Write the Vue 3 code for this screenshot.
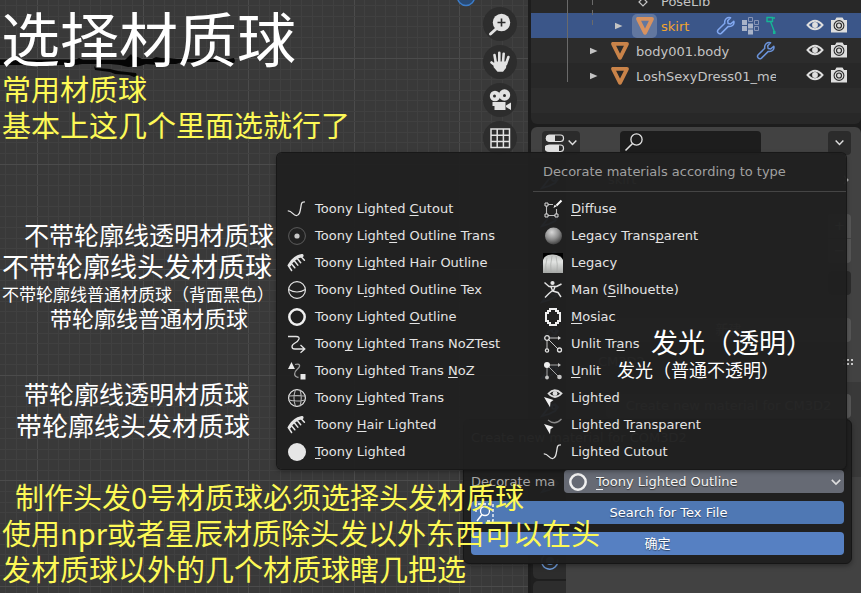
<script setup>
import { ref } from 'vue'

const pitch = 105.6
const gridLines = (start, end) => {
  const out = []
  for (let i = -10; start + (i * pitch) / 10 < end; i++) {
    out.push({ at: Math.floor(start + (i * pitch) / 10) + 0.5, major: i % 10 === 0 })
  }
  return out
}
const columns = gridLines(37.5, 1900)
const rows = gridLines(58.5, 1200)

const query = ref('')
const material = ref('Toony Lighted Outline')

const outliner = [
  { name: 'skirt', depth: 1, active: true, mods: ['wrench', 'lattice', 'bone'] },
  { name: 'body001.body', depth: 0, mods: ['wrench'] },
  { name: 'LoshSexyDress01_me', depth: 0, mods: [] },
]

// Each label is split around its keyboard mnemonic: [before, key, after].
const toony = [
  { icon: 'curve', label: ['Toony Lighted ', 'C', 'utout'] },
  { icon: 'dot', label: ['Toony Light', 'e', 'd Outline Trans'] },
  { icon: 'comb', label: ['Toony Li', 'g', 'hted Hair Outline'] },
  { icon: 'ball', label: ['Toony L', 'i', 'ghted Outline Tex'] },
  { icon: 'ring', label: ['Toony Lighted ', 'O', 'utline'] },
  { icon: 'snake', label: ['Toon', 'y', ' Lighted Trans NoZTest'] },
  { icon: 'link', label: ['Toony Lighted Trans ', 'N', 'oZ'] },
  { icon: 'globe', label: ['Toony ', 'L', 'ighted Trans'] },
  { icon: 'comb', label: ['Toony ', 'H', 'air Lighted'] },
  { icon: 'disc', label: ['', 'T', 'oony Lighted'] },
]
const basic = [
  { icon: 'brushbox', label: ['', 'D', 'iffuse'] },
  { icon: 'sphere', label: ['Legacy Trans', 'p', 'arent'] },
  { icon: 'hair', label: ['Legacy', '', ''] },
  { icon: 'man', label: ['Man (', 'S', 'ilhouette)'] },
  { icon: 'mosaic', label: ['', 'M', 'osiac'] },
  { icon: 'nodes', label: ['Unlit Tr', 'a', 'ns'] },
  { icon: 'nodesfill', label: ['', 'U', 'nlit'] },
  { icon: 'eyecursor', label: ['Lighted', '', ''] },
  { icon: 'arccursor', label: ['Lighted T', 'r', 'ansparent'] },
  { icon: 'curve', label: ['Lighted Cutout', '', ''] },
]
const labelOf = (item) => item.label.join('')
</script>

<template>
  <main class="app">
    <svg class="defs" aria-hidden="true">
      <defs>
        <radialGradient id="ball-shade" cx="40%" cy="28%" r="75%">
          <stop offset="0" stop-color="#d8d8d8" /><stop offset=".55" stop-color="#8e8e8e" /><stop offset="1" stop-color="#3c3c3c" />
        </radialGradient>
        <linearGradient id="hair-shade" x1="0" y1="0" x2="0" y2="1">
          <stop offset="0" stop-color="#bfc1bf" /><stop offset=".4" stop-color="#e2e4e2" /><stop offset="1" stop-color="#a5a7a5" />
        </linearGradient>
      </defs>
      <symbol id="i-curve" viewBox="0 0 20 20"><path d="M.8 11.800c4.500-.3 5 4.800 8.700 4.800c4 0 3.800-7 5-12q.5-1.800 3.400-1.800" fill="none" stroke="#e4e4e4" stroke-width="1.300" /></symbol>
      <symbol id="i-dot" viewBox="0 0 20 20"><circle cx="10" cy="10" r="8.400" fill="none" stroke="#5c5c5c" /><circle cx="10" cy="10" r="2.600" fill="#c9c9c9" /></symbol>
      <symbol id="i-comb" viewBox="0 0 20 20"><path d="M2.500 12C4.800 7.500 9 3.800 15 2.600" fill="none" stroke="#e4e4e4" stroke-width="3.200" stroke-linecap="round" /><path d="M1.300 12.500l3.300 5M4.300 10.500l3.500 4.300M7.300 7.800l3.500 4.300M10.500 5.700l3.200 4M14 3.500l3.400 3.800" stroke="#e4e4e4" stroke-width="1.500" stroke-linecap="round" /></symbol>
      <symbol id="i-ball" viewBox="0 0 20 20"><circle cx="10" cy="10" r="8.400" fill="none" stroke="#e4e4e4" stroke-width="1.200" /><path d="M1.600 9.500q8.400 5 16.800 0" fill="none" stroke="#e4e4e4" stroke-width="1.200" /></symbol>
      <symbol id="i-ring" viewBox="0 0 20 20"><circle cx="10" cy="10" r="7.700" fill="none" stroke="#f0f0f0" stroke-width="2.500" /></symbol>
      <symbol id="i-snake" viewBox="0 0 20 20"><path d="M1 2.500h8c6 0 2 5-1 6.500c-4 2-4 6 0 6h9.500M13.500 11l4.300 4-4.300 3.700" fill="none" stroke="#e4e4e4" stroke-width="1.300" /></symbol>
      <symbol id="i-link" viewBox="0 0 20 20"><path d="M4.500 1l3.400 7H1zM13.500 13h5v5.500h-5z" fill="#e8e8e8" /><path d="M8 3.500c5-1.500 6 1.500 2.500 4.500s-4.500 7.500 1 8.500" fill="none" stroke="#9c9c9c" stroke-width="1.300" /></symbol>
      <symbol id="i-globe" viewBox="0 0 20 20"><circle cx="10" cy="10" r="8.400" fill="none" stroke="#e4e4e4" stroke-width="1.200" /><path d="M8.500 1.600q-3 8.400 0 16.800M1.600 8q8.400-.8 16.800 0M1.600 12q8.400 2 16.800 0M13 2q2.500 8 0 16" fill="none" stroke="#b4b4b4" stroke-width="1.100" /></symbol>
      <symbol id="i-disc" viewBox="0 0 20 20"><circle cx="10" cy="10" r="9" fill="#e6e6e6" /></symbol>
      <symbol id="i-brushbox" viewBox="0 0 20 20"><path d="M5 5.500h5M3.500 7v8M5 16.500h7M13.500 10v5" fill="none" stroke="#bdbdbd" stroke-width="1.100" /><path d="M2 4h3v3H2zM2 15h3v3H2zM12 15h3v3h-3z" fill="none" stroke="#d8d8d8" /><path d="M18.500 1.500l-5 5" stroke="#fff" stroke-width="2" /><path d="M10.500 9l1-3 2.500 1z" fill="#fff" /></symbol>
      <symbol id="i-sphere" viewBox="0 0 20 20"><circle cx="10.500" cy="10" r="8.500" fill="url(#ball-shade)" /></symbol>
      <symbol id="i-hair" viewBox="0 0 20 20"><path d="M0 0h20v20H0z" fill="#000" /><path d="M0 20V7Q2 1 10 1.500T20 7v13z" fill="url(#hair-shade)" /><path d="M4 5q-2 7-1 15M9 3q-2 8-1 17M13 3q2 8 1 17" stroke="#a8aaa8" stroke-width=".7" fill="none" /></symbol>
      <symbol id="i-man" viewBox="0 0 20 20"><circle cx="9.500" cy="3" r="2.100" fill="#e4e4e4" /><path d="M1.500 2.500L6 6.500h7.500l5-2.500M8 7l1.500 3.500-3.500 3-4 4M12 7l-1.500 3.500M9.500 11l5.500 1.500 3 4.500" fill="none" stroke="#e4e4e4" stroke-width="1.400" stroke-linejoin="round" /></symbol>
      <symbol id="i-mosaic" viewBox="0 0 20 20"><path d="M7 2h6v2h2v2h2v8h-2v2h-2v2H7v-2H5v-2H3V6h2V4h2z" fill="none" stroke="#efefef" stroke-width="2" shape-rendering="crispEdges" /></symbol>
      <symbol id="i-nodes" viewBox="0 0 20 20"><path d="M5.500 4H16M4 5.500V15M5 5l10 10" stroke="#c4c4c4" fill="none" /><g fill="#202020" stroke="#e0e0e0" stroke-width="1.300"><circle cx="4" cy="4" r="2.300" /><circle cx="4" cy="16.500" r="1.600" /><circle cx="16.500" cy="16" r="2" /></g><path d="M15 2l3 2-3 2z" fill="#e0e0e0" /></symbol>
      <symbol id="i-nodesfill" viewBox="0 0 20 20"><path d="M5.500 4H16M4 5.500V15M5 5l10 10" stroke="#a4a4a4" fill="none" /><circle cx="4" cy="4" r="3" fill="#f0f0f0" /><circle cx="4" cy="16.500" r="1.900" fill="#c4c4c4" /><circle cx="16.500" cy="16" r="2.300" fill="#c4c4c4" /><path d="M15 2l3 2-3 2z" fill="#c4c4c4" /></symbol>
      <symbol id="i-eyecursor" viewBox="0 0 20 20"><path d="M5.500 5.500q6-6.500 13 0q-6.500 7-13 0z" fill="none" stroke="#dcdcdc" stroke-width="1.800" /><circle cx="12" cy="5.500" r="2.400" fill="#dcdcdc" /><path d="M1 9l9.500 3-3 2.300-.5 5z" fill="#f0f0f0" /></symbol>
      <symbol id="i-arccursor" viewBox="0 0 20 20"><path d="M5 5q7 6 13.500-1" fill="none" stroke="#8a8a8a" stroke-width="1.300" /><path d="M1 9l9.500 3-3 2.300-.5 5z" fill="#f0f0f0" /></symbol>
      <symbol id="i-wrench" viewBox="0 0 20 20"><path d="M17.800 5.200l-3 2.700-2.700-.4-.4-2.700 2.900-3c-3.500-1-6.600 1.700-5.800 5.500l-6.600 6.500c-1.900 2.400 1 5.200 3.300 3.300l6.800-6.700c3.800.8 6.400-2 5.500-5.200z" fill="none" stroke="currentColor" stroke-width="1.500" stroke-linejoin="round" /></symbol>
      <symbol id="i-lattice" viewBox="0 0 20 20"><path d="M1 4h5v5H1zM1 10h5v5H1zM7 7.500h5v5H7zM7 13.500h5v5H7z" fill="#a9b3c8" /><path d="M7.500 1.500h4v4h-4zM13.500 4.500h4v4h-4zM13.500 10.500h4v4h-4z" fill="none" stroke="#8794b4" /></symbol>
      <symbol id="i-bone" viewBox="0 0 20 20"><path d="M1 1.500h5.500v4H1zM6.500 2H9M4.500 5.500l4 10.500" fill="none" stroke="#16b695" stroke-width="1.400" /><path d="M7 15h2.500v3H7z" fill="#16b695" /></symbol>
      <symbol id="i-mesh" viewBox="0 0 20 20"><path d="M3 2.800h14L10 16.800z" fill="none" stroke="currentColor" stroke-width="3.800" stroke-linejoin="round" /></symbol>
      <symbol id="i-eye" viewBox="0 0 20 20"><path d="M2.500 9q7.500-8.500 15 0q-7.500 8.500-15 0z" fill="none" stroke="#dedede" stroke-width="1.900" /><circle cx="10" cy="9" r="2.900" fill="#dedede" /></symbol>
      <symbol id="i-camera" viewBox="0 0 20 20"><path d="M2 4h4l1.500-2.500h6L15 4h3v12.500H2z" fill="#dedede" /><circle cx="10" cy="9.500" r="4.900" fill="none" stroke="#2b2b2b" stroke-width="1.100" /><circle cx="10" cy="9.500" r="2.500" fill="none" stroke="#2b2b2b" stroke-width="1.200" /></symbol>
      <symbol id="i-chevron" viewBox="0 0 10 10"><path d="M1.500 3.200L5 6.800l3.500-3.600" fill="none" stroke="#dedede" stroke-width="1.300" /></symbol>
      <symbol id="i-search" viewBox="0 0 20 20"><circle cx="12.500" cy="6.500" r="5.600" fill="none" stroke="#e2e2e2" stroke-width="1.300" /><path d="M8.300 10.700L1.500 17.500" stroke="#e2e2e2" stroke-width="1.600" /></symbol>
    </svg>

    <section class="viewport" aria-label="3D viewport">
      <svg class="grid" aria-hidden="true">
        <line v-for="c in columns" :key="'c' + c.at" :x1="c.at" :x2="c.at" y1="0" y2="1200" :class="{ major: c.major }" />
        <line v-for="r in rows" :key="'r' + r.at" :y1="r.at" :y2="r.at" x1="0" x2="1900" :class="{ major: r.major }" />
        <path d="M0 59.500h76l3-1.500 4 2h42l3-3 3-3 2 3h5l4 2h10l4-2 5 1h8l8 1 5 0h46l6-1 1 3-1 2-4-1h-48l-6 2h-10l-8 1-12-1-6 2-12 1-8-2-10-1h-28l-6 1H0z" fill="#050505" />
        <path d="M94 66l2 2 14 1 8 2 18 2 1 3-3 1-5-2-14-1-5-2-15-2z" fill="#050505" />
        <circle cx="466" cy="-3" r="8.500" fill="#284a75" stroke="#3b7cc9" stroke-width="1.500" />
      </svg>
      <div class="tools">
        <button aria-label="Zoom"><svg viewBox="0 0 34 34"><circle cx="18.500" cy="15.500" r="8.700" fill="#e2e2e2" /><path d="M13 22l-5.500 5" stroke="#e2e2e2" stroke-width="3" stroke-linecap="round" /><path d="M18.500 11.500v8M14.500 15.500h8" stroke="#2b2b2b" stroke-width="1.600" /></svg></button>
        <button aria-label="Move"><svg viewBox="0 0 34 34"><path d="M13 19L11.500 10M16.300 17V7.800M20 17l.7-8.300M23 19l2.400-7M13 21l-4.500-3.500" stroke="#e2e2e2" stroke-width="2.600" stroke-linecap="round" /><path d="M11.500 16.500h12.300l-.8 6.500-3 3.800h-5.500l-4-4.800z" fill="#e2e2e2" /></svg></button>
        <button aria-label="Camera view"><svg viewBox="0 0 34 34"><circle cx="12" cy="13" r="5.200" fill="#e2e2e2" /><circle cx="21.500" cy="12" r="5.700" fill="#e2e2e2" /><circle cx="11.500" cy="13" r="1.500" fill="#2b2b2b" /><circle cx="21.500" cy="12.500" r="1.500" fill="#2b2b2b" /><path d="M9.500 19h13v8h-11v-4h-2zM23 22.500l5-3v7.500l-5-3z" fill="#e2e2e2" /></svg></button>
        <button aria-label="Toggle grid view"><svg viewBox="0 0 34 34"><path d="M8 8h18.500v18.500H8zM14.200 8v18.500M20.400 8v18.500M8 14.200h18.500M8 20.400h18.500" fill="none" stroke="#e2e2e2" stroke-width="1.500" /></svg></button>
      </div>
    </section>

    <aside class="side">
      <section class="outliner" aria-label="Outliner">
        <div class="row pose"><svg class="key" viewBox="0 0 10 10"><path d="M5 1l4 4-4 4-4-4z" fill="none" stroke="#c4c4c4" stroke-width="1.200" /></svg><span>PoseLib</span></div>
        <div v-for="o in outliner" :key="o.name" class="row" :class="{ active: o.active, nested: o.depth }">
          <div class="entry">
            <svg class="twist" viewBox="0 0 8 8"><path d="M0 .8L7.500 4 0 7.200z" fill="#c4c4c4" /></svg>
            <span class="mesh"><svg viewBox="0 0 20 20"><use href="#i-mesh" /></svg></span>
            <span class="name">{{ o.name }}</span>
            <span class="mods"><svg v-for="m in o.mods" :key="m" viewBox="0 0 20 20"><use :href="'#i-' + m" /></svg></span>
          </div>
          <button :aria-label="'Hide ' + o.name"><svg viewBox="0 0 20 20"><use href="#i-eye" /></svg></button>
          <button :aria-label="'Render ' + o.name"><svg viewBox="0 0 20 20"><use href="#i-camera" /></svg></button>
        </div>
        <div class="row"></div>
        <div class="row last"></div>
        <span class="guide"></span>
        <span class="guide dashed"></span>
      </section>

      <section class="props" aria-label="Properties">
        <header class="bar">
          <button class="editor" aria-label="Editor type"><svg class="toggles" viewBox="0 0 20 20"><rect x="1.500" y="2" width="17" height="6.500" rx="3" fill="none" stroke="#e0e0e0" stroke-width="1.200" /><path d="M4 2h6v6.500H4a3 3 0 010-6.500z" fill="#e0e0e0" /><rect x="1.500" y="12" width="17" height="6.500" rx="3" fill="none" stroke="#e0e0e0" stroke-width="1.200" /><path d="M2 12h12v6.500H4a3 3 0 01-2-6.500z" fill="#e0e0e0" /></svg><svg class="chev" viewBox="0 0 10 10"><use href="#i-chevron" /></svg></button>
          <label class="find"><svg viewBox="0 0 20 20"><use href="#i-search" /></svg><input v-model="query" type="text" aria-label="Search properties" /></label>
          <button class="more" aria-label="Options"><svg class="chev" viewBox="0 0 10 10"><use href="#i-chevron" /></svg></button>
        </header>
        <div class="pbody">
          <nav class="tabs" aria-label="Property tabs">
            <button v-for="n in 12" :key="n" :aria-label="'Tab ' + n">
              <svg v-if="n === 11" viewBox="0 0 20 20"><circle cx="10" cy="10" r="4" fill="#6f9fe0" /><path d="M4 4.500a8 8 0 1013.500 4" fill="none" stroke="#6f9fe0" stroke-width="1.500" /></svg>
              <svg v-else viewBox="0 0 20 20"><path d="M2 17L9 8l6-3 3 3-3 4-6 3z" fill="none" stroke="#6f9fe0" stroke-width="1.600" /><circle cx="14" cy="8" r="2" fill="none" stroke="#6f9fe0" stroke-width="1.600" /></svg>
            </button>
          </nav>
          <div class="panel">
            <p class="crumb"><span>skirt</span><svg viewBox="0 0 10 10"><path d="M3 1l4 4-4 4" fill="none" stroke="#b8b8b8" stroke-width="1.200" /></svg></p>
            <div class="slots"><button aria-label="Add slot">+</button><button aria-label="Remove slot">−</button></div>
            <button class="specials" aria-label="Specials"></button>
            <button class="wide new">新建</button>
            <p class="cm">CM3D2<svg viewBox="0 0 12 8"><path d="M0 1h2v2H0zM4 1h2v2H4zM8 1h2v2H8zM0 5h2v2H0zM4 5h2v2H4zM8 5h2v2H8z" fill="#c8c8c8" /></svg></p>
            <div class="sub"><button class="wide">Create new material for CM3D2</button></div>
          </div>
        </div>
      </section>
    </aside>

    <form class="dialog" @submit.prevent>
      <h2>Create new material for COM3D2</h2>
      <div class="field">
        <label for="material">Decorate ma</label>
        <span class="pick">
          <svg class="lead" viewBox="0 0 20 20"><use href="#i-ring" /></svg>
          <select id="material" v-model="material">
            <option v-for="t in [...toony, ...basic]" :key="labelOf(t)">{{ labelOf(t) }}</option>
          </select>
          <span class="mnemonic"></span>
          <svg class="drop" viewBox="0 0 10 10"><use href="#i-chevron" /></svg>
        </span>
      </div>
      <button type="button" class="blue search"><svg viewBox="0 0 20 20"><circle cx="10" cy="8" r="4.500" fill="none" stroke="#fff" stroke-width="1.300" /><path d="M7 11.500L2 18" stroke="#fff" stroke-width="1.500" /><path d="M1 9V1h17v17h-8" fill="none" stroke="#fff" stroke-width="1.300" stroke-dasharray="3 2" /></svg><span>Search for Tex File</span></button>
      <button type="submit" class="blue ok">确定</button>
    </form>

    <div class="menu" role="listbox" aria-label="Decorate materials according to type">
      <div class="col left">
        <button v-for="t in toony" :key="labelOf(t)" role="option" :aria-selected="labelOf(t) === material" @click="material = labelOf(t)">
          <svg viewBox="0 0 20 20"><use :href="'#i-' + t.icon" /></svg><span>{{ t.label[0] }}<u>{{ t.label[1] }}</u>{{ t.label[2] }}</span>
        </button>
      </div>
      <div class="col right">
        <h2>Decorate materials according to type</h2>
        <button v-for="t in basic" :key="labelOf(t)" role="option" :aria-selected="labelOf(t) === material" @click="material = labelOf(t)">
          <svg viewBox="0 0 20 20"><use :href="'#i-' + t.icon" /></svg><span>{{ t.label[0] }}<u>{{ t.label[1] }}</u>{{ t.label[2] }}</span>
        </button>
      </div>
    </div>

    <div class="notes">
      <h1 class="note title">选择材质球</h1>
      <p class="note yellow usual">常用材质球<br />基本上这几个里面选就行了</p>
      <p class="note n25 a">不带轮廓线透明材质球</p>
      <p class="note n27 b">不带轮廓线头发材质球</p>
      <p class="note n17 c">不带轮廓线普通材质球（背面黑色）</p>
      <p class="note n22 d">带轮廓线普通材质球</p>
      <p class="note n25 e">带轮廓线透明材质球</p>
      <p class="note n26 f">带轮廓线头发材质球</p>
      <p class="note n27 g">发光（透明）</p>
      <p class="note n18 h">发光（普通不透明）</p>
      <p class="note yellow tip"><span class="indent">制作头发0号材质球必须选择头发材质球</span><br />使用npr或者星辰材质除头发以外东西可以在头<br />发材质球以外的几个材质球瞎几把选</p>
    </div>
  </main>
</template>

<style>
body { background: #1d1d1d; }
</style>

<style scoped>
.app {
  position: relative;
  display: grid;
  grid-template-columns: minmax(0, 1fr) 330px;
  gap: 3px;
  height: 100vh;
  overflow: hidden;
  background: #1d1d1d;
  color: #e4e4e4;
  font: 13px/20px "DejaVu Sans", "Noto Sans CJK SC", sans-serif;
}
.app *, .app *::before { box-sizing: border-box; }
.defs { position: absolute; width: 0; height: 0; }
h1, h2, p { margin: 0; font-weight: 400; }
button, select, input { margin: 0; padding: 0; border: 0; color: inherit; font: inherit; background: none; }
svg { display: block; flex: none; width: 20px; height: 20px; }

.viewport { position: relative; display: flex; justify-content: flex-end; overflow: hidden; background: #393939; }
.grid { position: absolute; inset: 0; width: 100%; height: 100%; }
.grid line { stroke: #404040; }
.grid line.major { stroke: #4b4b4b; }
.tools { position: relative; display: flex; flex-direction: column; gap: 4px; padding: 7px 11px; }
.tools button { width: 34px; height: 34px; border-radius: 50%; background: #2d2d2d; }
.tools svg { width: 34px; height: 34px; }

.side { display: flex; flex-direction: column; gap: 3px; min-width: 0; }
.outliner { position: relative; display: flex; flex-direction: column; justify-content: flex-end; height: 124px; overflow: hidden; border-radius: 0 0 6px 6px; color: #c4c4c4; }
.row { display: flex; flex: none; align-items: center; height: 25px; padding-right: 12px; background: #2c2c2c; }
.row:nth-child(4), .row.last, .row.pose { background: #282828; }
.row.pose { gap: 13px; padding: 3px 0 0 107px; }
.key { width: 10px; height: 10px; }
.row.last { height: 11px; }
.row.active { background: #3b5689; color: #f0a42e; }
.entry { display: flex; align-items: center; width: 245px; margin-right: auto; padding-left: 59px; overflow: hidden; white-space: nowrap; }
.nested .entry { padding-left: 84px; }
.twist { width: 8px; height: 8px; margin-right: 9px; }
.mesh { display: flex; flex: none; width: 25px; height: 24px; align-items: center; justify-content: center; margin-right: 4px; border-radius: 5px; color: #c98349; }
.active .mesh { background: #62779f; color: #d8925f; }
.name { padding-top: 2px; }
.mods { display: flex; gap: 5px; margin-left: 27px; color: #6a92d8; }
.active .mods { color: #82a8f0; }
.row button { width: 20px; height: 20px; margin-left: 4px; }
.guide { position: absolute; top: 0; left: 36px; width: 1px; height: 82px; background: #6a6a6a; }
.dashed { left: 61px; height: 30px; background: repeating-linear-gradient(#6a6a6a 0 5px, transparent 5px 10px); }

.props { display: flex; flex: 1; flex-direction: column; min-height: 0; overflow: hidden; border-radius: 6px 6px 0 0; background: #424242; }
.bar { display: flex; flex: none; align-items: center; height: 31px; padding: 0 10px 0 11px; }
.bar button { display: flex; align-items: center; justify-content: center; height: 24px; border-radius: 4px; background: #2b2b2b; }
.bar .editor { gap: 2px; width: 38px; }
.chev { width: 11px; height: 11px; }
.find { display: flex; align-items: center; width: 141px; height: 24px; margin: 0 auto 0 40px; padding: 0 4px; border-radius: 4px; background: #1d1d1d; }
.find input { flex: 1; min-width: 0; outline: 0; }
.bar .more { width: 23px; }
.pbody { display: flex; flex: 1; min-height: 0; }
.tabs { display: flex; flex-direction: column; gap: 2px; flex: none; width: 35px; padding: 5px 0 0 2px; background: #1f1f1f; }
.tabs button { display: flex; flex: none; align-items: center; justify-content: center; height: 36px; border-radius: 5px 0 0 5px; background: #2d2d2d; }
.panel { display: flex; flex: 1; flex-direction: column; min-width: 0; padding-right: 10px; color: #b0b0b0; }
.crumb { display: flex; justify-content: space-between; align-items: center; height: 36px; padding: 8px 0 0 42px; }
.crumb svg { width: 10px; height: 10px; }
.slots { display: flex; flex-direction: column; gap: 1px; align-self: flex-end; margin-top: 20px; border-radius: 4px; overflow: hidden; }
.slots button { width: 23px; height: 24px; background: #565656; }
.specials { align-self: flex-end; width: 23px; height: 24px; margin-top: 8px; border-radius: 4px; background: #2b2b2b; }
.wide { height: 24px; border-radius: 4px; background: #565656; }
.new { margin: 23px 0 0 40px; }
.cm { display: flex; align-items: center; justify-content: space-between; height: 40px; padding-left: 32px; }
.cm svg { width: 12px; height: 8px; margin-right: -4px; }
.sub { display: flex; height: 95px; margin-right: -10px; padding: 12px 10px 0 40px; background: #393939; }
.sub .wide { flex: 1; }

.dialog { position: absolute; top: 419px; right: 9px; display: flex; flex-direction: column; gap: 8px; width: 389px; padding: 8px 7px; border: 1px solid #161616; border-radius: 6px; background: rgb(31 31 31 / 97%); box-shadow: 0 2px 5px rgb(0 0 0 / 35%); }
.dialog h2 { height: 34px; color: #a8a8a8; font-size: 13px; line-height: 20px; }
.field { display: flex; align-items: center; height: 23px; color: #a4a4a4; }
.field label { flex: 1; white-space: nowrap; }
.pick { position: relative; width: 280px; height: 23px; border-radius: 4px; background: #666a74; color: #f4f4f4; }
.pick select { width: 100%; height: 100%; padding-left: 32px; appearance: none; outline: 0; text-shadow: 0 1px 1px #333; }
.pick option { background: #212121; }
.lead { position: absolute; top: 2px; left: 4px; }
.drop { position: absolute; top: 6px; right: 2px; width: 12px; height: 12px; }
.mnemonic { position: absolute; bottom: 3px; left: 32px; width: 7px; height: 1px; background: #f4f4f4; }
.blue { display: flex; align-items: center; justify-content: center; height: 23px; border-radius: 4px; background: #5680c2; color: #fff; text-shadow: 0 1px 1px rgb(0 0 0 / 50%); }
.search { background: #4f78b4; padding: 0 2px 0 4px; }
.search span { flex: 1; text-align: center; }

.menu { position: absolute; top: 153px; right: 15px; display: flex; align-items: flex-end; width: 569px; padding-bottom: 4px; border-radius: 5px; background: rgb(32 32 32 / 96%); box-shadow: 0 0 0 1px #181818, 0 2px 5px rgb(0 0 0 / 40%); }
.left { width: 256px; }
.right { flex: 1; }
.col { display: flex; flex-direction: column; }
.col h2 { height: 39px; margin-bottom: 3px; padding-left: 10px; border-bottom: 1px solid #454545; color: #a0a0a0; font-size: 13px; line-height: 38px; }
.col button { display: flex; align-items: center; gap: 8px; height: 27px; padding-left: 10px; text-align: left; white-space: nowrap; }
u { text-decoration-thickness: 1px; text-underline-offset: 2px; text-decoration-skip-ink: none; }

.notes { position: absolute; inset: 0; pointer-events: none; }
.note { position: absolute; color: #fff; font-family: "Noto Sans CJK SC", sans-serif; white-space: nowrap; }
.title { top: 5px; left: 1px; font-size: 59px; line-height: 64px; }
.yellow { color: #fdf956; font-size: 29px; line-height: 36px; }
.usual { top: 70px; left: 2px; }
.tip { top: 478px; left: 2px; }
.indent { padding-left: 13px; }
.n17 { font-size: 17px; line-height: 22px; }
.n18 { font-size: 18px; line-height: 22px; }
.n22 { font-size: 22px; line-height: 26px; }
.n25 { font-size: 25px; line-height: 30px; }
.n26 { font-size: 26px; line-height: 32px; }
.n27 { font-size: 27px; line-height: 32px; }
.a { top: 219px; left: 24px; }
.b { top: 250px; left: 2px; }
.c { top: 283px; left: 2px; }
.d { top: 304px; left: 50px; }
.e { top: 378px; left: 24px; }
.f { top: 409px; left: 16px; }
.g { top: 326px; left: 651px; }
.h { top: 358px; left: 617px; }
</style>
